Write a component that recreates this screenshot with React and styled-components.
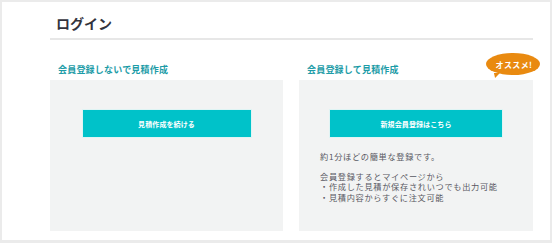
import React from "react";
import styled, { createGlobalStyle } from "styled-components";

const GlobalStyle = createGlobalStyle`
  html, body {
    margin: 0;
    padding: 0;
    background: #ebebeb;
    font-family: "Noto Sans CJK JP", "Noto Sans", sans-serif;
  }
  * { box-sizing: border-box; }
`;

const Panel = styled.div`
  margin: 2px 2px 0 2px;
  height: 238px;
  background: #ffffff;
  padding: 0 17px 0 48px;
`;

const Title = styled.h1`
  margin: 0;
  padding: 10px 0 4px 6px;
  font-size: 14px;
  line-height: 22px;
  font-weight: 700;
  color: #33333d;
  border-bottom: 2px solid #e7e7e7;
`;

const Columns = styled.div`
  display: grid;
  grid-template-columns: 233px 234px;
  column-gap: 16px;
  margin-top: 24px;
`;

const Column = styled.section`
  position: relative;
`;

const Heading = styled.h2`
  margin: 0 0 4px;
  padding-left: 8px;
  font-size: 9px;
  line-height: 12px;
  letter-spacing: 0.2px;
  font-weight: 700;
  color: #1d9ca7;
`;

const Box = styled.div`
  height: 151px;
  background: #f2f3f3;
  padding-top: 29px;
  display: flex;
  flex-direction: column;
  align-items: center;
`;

const Button = styled.button`
  width: ${(p) => p.$w}px;
  height: 29px;
  border: 1px solid #dff4f4;
  background: #00c2c9;
  color: #ffffff;
  font-family: inherit;
  font-size: 7px;
  font-weight: 700;
  letter-spacing: 0.1px;
  padding: 0;
  cursor: pointer;
`;

const Note = styled.div`
  align-self: stretch;
  margin-top: 13px;
  padding-left: 21px;
  font-size: 8.2px;
  line-height: 10.5px;
  letter-spacing: 0.7px;
  color: #585862;
`;

const Line = styled.p`
  margin: 0;
  white-space: nowrap;
`;

const Gap = styled.div`
  height: 9px;
`;

const Badge = styled.div`
  position: absolute;
  top: -11px;
  right: -7px;
  width: 54px;
  height: 22px;
  border-radius: 50%;
  background: #e98a10;
  color: #ffffff;
  font-size: 8px;
  font-weight: 700;
  display: flex;
  align-items: center;
  justify-content: center;
  letter-spacing: 0.4px;
  padding-left: 2px;
  &::after {
    content: "";
    position: absolute;
    left: 7px;
    bottom: -3px;
    border-style: solid;
    border-width: 5px 3px 0 3px;
    border-color: #e98a10 transparent transparent transparent;
    transform: skewX(-20deg);
  }
`;

export default function App() {
  return (
    <>
      <GlobalStyle />
      <Panel>
        <Title>ログイン</Title>
        <Columns>
          <Column>
            <Heading>会員登録しないで見積作成</Heading>
            <Box>
              <Button $w={170}>見積作成を続ける</Button>
            </Box>
          </Column>
          <Column>
            <Heading>会員登録して見積作成</Heading>
            <Badge>オススメ!</Badge>
            <Box>
              <Button $w={174}>新規会員登録はこちら</Button>
              <Note>
                <Line>約1分ほどの簡単な登録です。</Line>
                <Gap />
                <Line>会員登録するとマイページから</Line>
                <Line>・作成した見積が保存されいつでも出力可能</Line>
                <Line>・見積内容からすぐに注文可能</Line>
              </Note>
            </Box>
          </Column>
        </Columns>
      </Panel>
    </>
  );
}
